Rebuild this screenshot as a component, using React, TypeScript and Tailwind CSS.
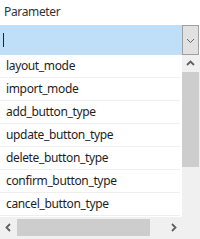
const rows = [
  "layout_mode",
  "import_mode",
  "add_button_type",
  "update_button_type",
  "delete_button_type",
  "confirm_button_type",
  "cancel_button_type",
];

function Chevron({ dir, w = 1.8 }: { dir: "up" | "down" | "left" | "right"; w?: number }) {
  const d = {
    up: "M1 6 L4.5 2.5 L8 6",
    down: "M1 3 L4.5 6.5 L8 3",
    left: "M6 1 L2.5 4.5 L6 8",
    right: "M3 1 L6.5 4.5 L3 8",
  }[dir];
  return (
    <svg width="9" height="9" viewBox="0 0 9 9">
      <path d={d} fill="none" stroke="currentColor" strokeWidth={w} />
    </svg>
  );
}

export default function App() {
  return (
    <div className="w-[200px] h-[239px] bg-white overflow-hidden text-[12px] tracking-[-0.35px] text-[#1e1e1e] font-['Noto_Sans',sans-serif] flex flex-col">
      <div className="h-[25px] pl-[4px] pt-[3px] text-[#333]">Parameter</div>
      <div className="h-[30px] flex">
        <div className="flex-1 bg-[#bfdff8] flex items-center pl-[3px]">
          <div className="w-px h-[14px] bg-[#222]" />
        </div>
        <div className="w-[17px] bg-[#e1e1e1] border border-[#a0a0a0] flex items-center justify-center text-[#666]">
          <Chevron dir="down" w={1} />
        </div>
        <div className="w-[1px] bg-white" />
      </div>
      <div className="h-[162px] flex">
        <div className="flex-1 flex flex-col pr-[2px]">
          {rows.map((r) => (
            <div key={r} className="h-[23px] shrink-0 flex items-center pl-[6px] border-b border-[#efefef]">
              {r}
            </div>
          ))}
        </div>
        <div className="w-[17px] bg-[#f0f0f0] flex flex-col">
          <div className="h-[17px] flex items-center justify-center text-[#606060]">
            <Chevron dir="up" />
          </div>
          <div className="h-[95px] bg-[#cdcdcd]" />
        </div>
        <div className="w-[1px] bg-[#f0f0f0]" />
      </div>
      <div className="flex-1 bg-[#f0f0f0] flex items-start pt-[2px]">
        <div className="w-[17px] h-[17px] flex items-center justify-center text-[#606060]">
          <Chevron dir="left" />
        </div>
        <div className="w-[133px] h-[17px] bg-[#cdcdcd]" />
        <div className="w-[32px] h-[17px] flex items-center justify-end pr-[4px] text-[#606060]">
          <Chevron dir="right" />
        </div>
      </div>
    </div>
  );
}
